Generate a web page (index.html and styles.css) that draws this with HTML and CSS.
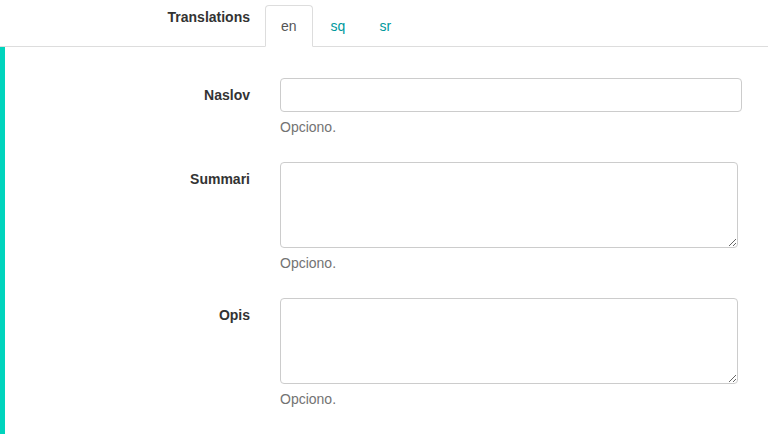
FILE: index.html
```html
<!DOCTYPE html>
<html lang="sr">
<head>
<meta charset="utf-8">
<title>Translations</title>
<link rel="stylesheet" href="styles.css">
</head>
<body>
<div class="tabs-row">
  <div class="label-col"><span class="label">Translations</span></div>
  <ul class="nav-tabs">
    <li class="tab active"><a href="#">en</a></li>
    <li class="tab"><a href="#">sq</a></li>
    <li class="tab"><a href="#">sr</a></li>
  </ul>
</div>
<div class="tab-content">
  <div class="form-group">
    <div class="label-col inner"><label class="label" for="naslov">Naslov</label></div>
    <div class="field-col">
      <input class="form-control" id="naslov" type="text">
      <p class="help-block">Opciono.</p>
    </div>
  </div>
  <div class="form-group">
    <div class="label-col inner"><label class="label" for="summari">Summari</label></div>
    <div class="field-col">
      <textarea class="form-control area" id="summari"></textarea>
      <p class="help-block">Opciono.</p>
    </div>
  </div>
  <div class="form-group">
    <div class="label-col inner"><label class="label" for="opis">Opis</label></div>
    <div class="field-col">
      <textarea class="form-control area" id="opis"></textarea>
      <p class="help-block">Opciono.</p>
    </div>
  </div>
</div>
</body>
</html>
```

FILE: styles.css
```css
* { box-sizing: border-box; }
html, body {
  margin: 0;
  padding: 0;
  background: #fff;
  font-family: "Liberation Sans", Arial, sans-serif;
  font-size: 14px;
  line-height: 20px;
  color: #333;
}
.tabs-row {
  display: flex;
  border-bottom: 1px solid #ddd;
  height: 47px;
}
.label-col {
  width: 265px;
  flex: none;
  text-align: right;
  padding: 7px 15px 0 0;
}
.label-col.inner { width: 260px; }
.label {
  font-weight: bold;
  color: #333;
}
.nav-tabs {
  display: flex;
  list-style: none;
  margin: 5px 0 0 0;
  padding: 0;
}
.tab {
  margin-right: 2px;
}
.tab a {
  display: block;
  padding: 10px 15px;
  line-height: 20px;
  border: 1px solid transparent;
  border-radius: 4px 4px 0 0;
  color: #00999c;
  text-decoration: none;
}
.tab.active a {
  color: #555;
  background: #fff;
  border-color: #ddd;
  border-bottom-color: #fff;
  height: 42px;
}
.tab-content {
  display: flow-root;
  border-left: 5px solid #00d4bd;
  padding-top: 31px;
}
.form-group {
  display: flex;
  margin-bottom: 15px;
}
.field-col {
  flex: 1;
  padding: 0 26px 0 15px;
}
.form-control {
  display: block;
  width: 100%;
  height: 34px;
  margin: 0;
  padding: 6px 12px;
  font: inherit;
  color: #555;
  background: #fff;
  border: 1px solid #ccc;
  border-radius: 4px;
  outline: none;
}
.area {
  width: calc(100% - 4px);
  height: 86px;
}
.help-block {
  margin: 5px 0 10px;
  color: #737373;
}
```
